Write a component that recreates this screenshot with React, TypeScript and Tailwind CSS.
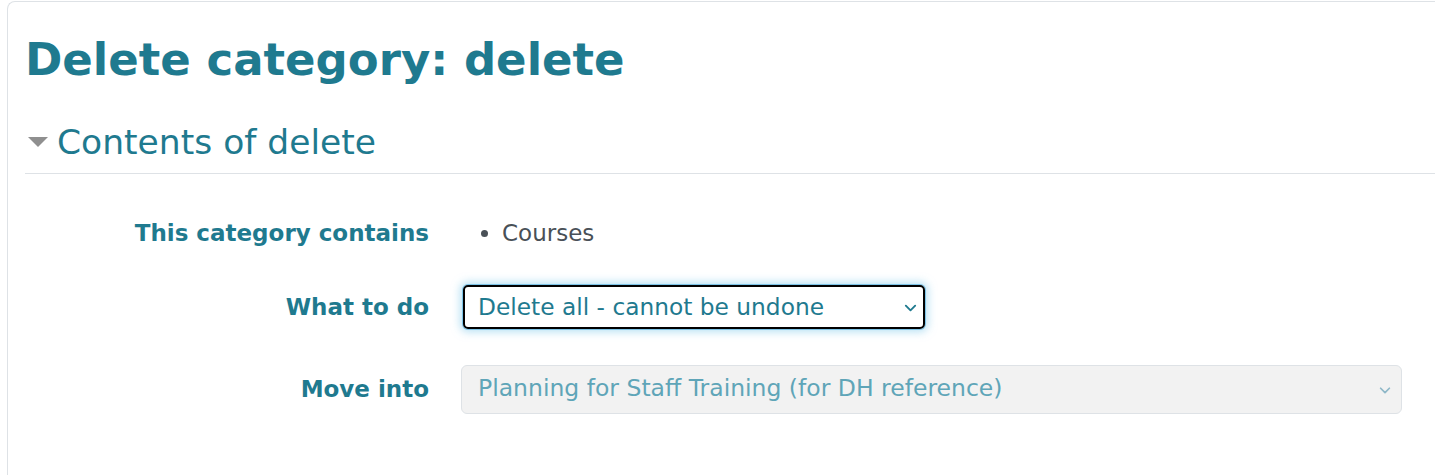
import React from 'react';

function Chevron({ className }: { className?: string }) {
  return (
    <svg viewBox="0 0 16 16" className={className} fill="none" stroke="currentColor" strokeWidth="2" strokeLinecap="round" strokeLinejoin="round">
      <path d="M3 6l5 5 5-5" />
    </svg>
  );
}

export default function App() {
  return (
    <div className="min-h-screen bg-white pt-px pl-[7px] font-['DejaVu_Sans',Verdana,sans-serif] text-[#1f7a8f]">
      <div className="rounded-tl-lg border-t border-l border-[#dee2e6] pl-[17px] pt-[26px] h-[474px]">
        <h1 className="text-[45px] font-bold leading-[64px]">Delete category: delete</h1>

        {/* Fieldset header */}
        <div className="mt-[26px] h-[48px] flex items-center gap-[9px] pl-[3px]">
          <svg viewBox="0 0 20 10" className="w-[20px] h-[10px] mt-[-1px]">
            <path d="M0 0h20L10 10z" fill="#8f8f8f" />
          </svg>
          <h2 className="text-[34.5px] leading-[48px]">Contents of delete</h2>
        </div>
        <div className="mt-[7px] border-t border-[#dee2e6]" />

        {/* Form rows */}
        <div className="mt-[37px] flex h-[44px] items-center">
          <div className="w-[404px] text-right text-[23px] font-bold">This category contains</div>
          <ul className="ml-[47px] list-disc pl-[26px] text-[23px] text-[#495057] marker:text-[#495057]">
            <li>Courses</li>
          </ul>
        </div>

        <div className="mt-[30px] flex h-[44px] items-center">
          <div className="w-[404px] text-right text-[23px] font-bold">What to do</div>
          <div className="relative ml-[34px] w-[462px] h-[44px] rounded-[5px] border-2 border-black shadow-[0_0_0_1px_#7dc3e6,0_0_8px_3px_rgba(125,200,235,0.55)] flex items-center pl-[13px] text-[23.3px]">
            <span>Delete all - cannot be undone</span>
            <Chevron className="absolute right-[5px] top-[13px] w-[15px] h-[15px] text-[#1f7a8f]" />
          </div>
        </div>

        <div className="mt-[36px] flex h-[48px] items-center">
          <div className="w-[404px] text-right text-[23px] font-bold">Move into</div>
          <div className="relative ml-[32px] w-[941px] h-[49px] rounded-[6px] border border-[#dee2e6] bg-[#f2f2f2] flex items-center pl-[16px] text-[23.5px] text-[#5fa5b8]">
            <span>Planning for Staff Training (for DH reference)</span>
            <Chevron className="absolute right-[9px] top-[17px] w-[14px] h-[14px] text-[#8fb8c8]" />
          </div>
        </div>
      </div>
    </div>
  );
}
